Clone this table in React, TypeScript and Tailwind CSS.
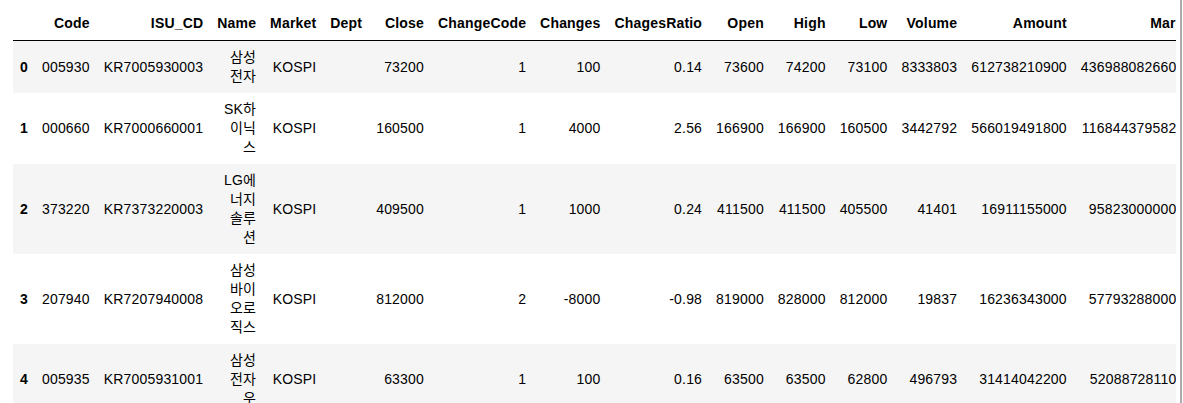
const columns = [
  "",
  "Code",
  "ISU_CD",
  "Name",
  "Market",
  "Dept",
  "Close",
  "ChangeCode",
  "Changes",
  "ChagesRatio",
  "Open",
  "High",
  "Low",
  "Volume",
  "Amount",
  "Marcap",
  "Stocks",
  "MarketId",
];

const rows = [
  ["0", "005930", "KR7005930003", "삼성전자", "KOSPI", "", "73200", "1", "100", "0.14", "73600", "74200", "73100", "8333803", "612738210900", "436988082660000", "5969782550", "STK"],
  ["1", "000660", "KR7000660001", "SK하이닉스", "KOSPI", "", "160500", "1", "4000", "2.56", "166900", "166900", "160500", "3442792", "566019491800", "116844379582500", "728002365", "STK"],
  ["2", "373220", "KR7373220003", "LG에너지솔루션", "KOSPI", "", "409500", "1", "1000", "0.24", "411500", "411500", "405500", "41401", "16911155000", "95823000000000", "234000000", "STK"],
  ["3", "207940", "KR7207940008", "삼성바이오로직스", "KOSPI", "", "812000", "2", "-8000", "-0.98", "819000", "828000", "812000", "19837", "16236343000", "57793288000000", "71174000", "STK"],
  ["4", "005935", "KR7005931001", "삼성전자우", "KOSPI", "", "63300", "1", "100", "0.16", "63500", "63500", "62800", "496793", "31414042200", "52088728110000", "822886700", "STK"],
];

export default function App() {
  return (
    <div className="h-[403px] w-[1182px] overflow-hidden border-r-2 border-[#ababab] bg-white pt-[7px] pl-[13px]">
      <div className="w-[1163px] overflow-hidden">
        <table className="border-collapse font-['Liberation_Sans','Noto_Sans_CJK_KR',sans-serif] text-[14px] leading-[19px] text-black">
          <thead>
            <tr>
              {columns.map((col, i) => (
                <th
                  key={i}
                  className="border-b border-black px-[7px] py-[7px] text-right align-bottom font-bold tracking-[0.18px]"
                >
                  {col}
                </th>
              ))}
            </tr>
          </thead>
          <tbody>
            {rows.map((row, r) => (
              <tr key={r} className={r % 2 === 0 ? "bg-[#f5f5f5]" : "bg-white"}>
                {row.map((cell, c) =>
                  c === 0 ? (
                    <th key={c} className="px-[7px] py-[7px] text-right align-middle font-bold tracking-[0.18px]">
                      {cell}
                    </th>
                  ) : (
                    <td key={c} className="px-[7px] py-[7px] text-right align-middle tracking-[0.18px]">
                      {cell}
                    </td>
                  )
                )}
              </tr>
            ))}
          </tbody>
        </table>
      </div>
    </div>
  );
}
